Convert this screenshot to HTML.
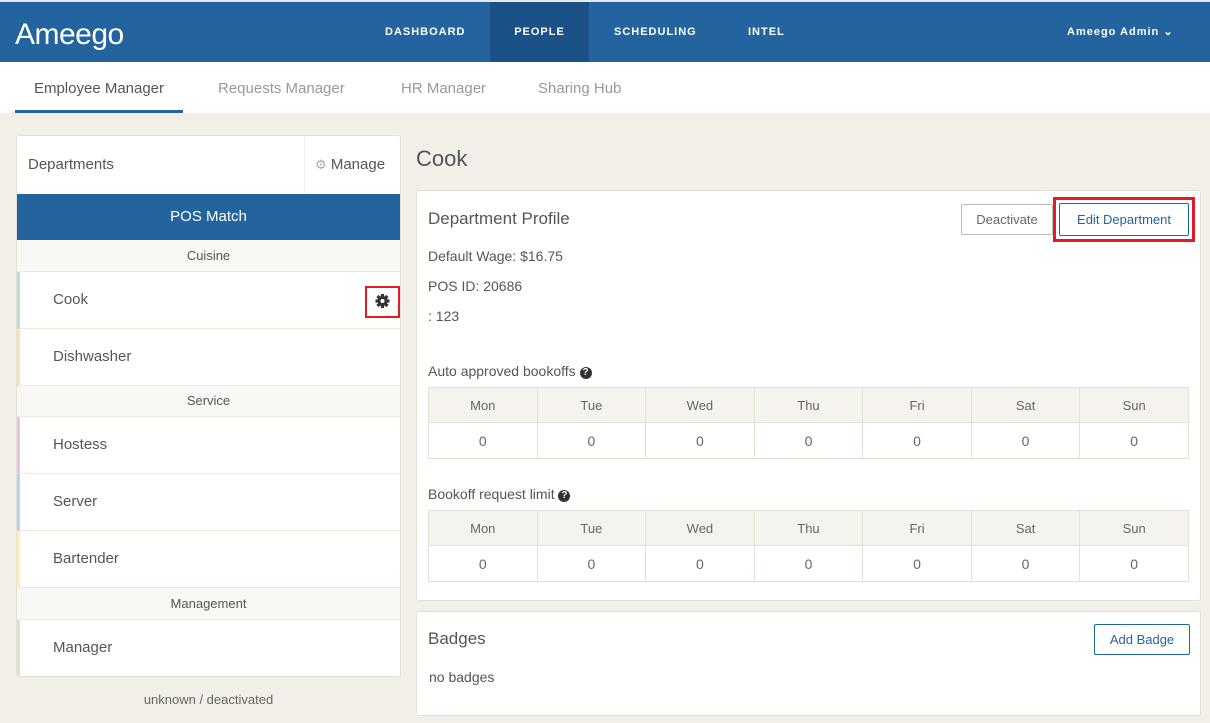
<!DOCTYPE html>
<html><head><meta charset="utf-8"><style>
*{box-sizing:border-box;margin:0;padding:0}
body{width:1210px;height:723px;overflow:hidden;background:#f2efe9;font-family:"Liberation Sans",sans-serif;color:#555;position:relative}
.a{position:absolute}
.nav{left:0;top:0;width:1210px;height:62px;background:#23649e;border-top:2px solid #e8e8e8}
.nav .i{position:absolute;top:0;height:60px;line-height:60px;color:#fff;font-size:11px;letter-spacing:1px;font-weight:600}
.tabs{left:0;top:62px;width:1210px;height:51px;background:#fff}
.tab{position:absolute;top:0;height:51px;line-height:54px;font-size:15px;color:#999}
.panel{background:#fff;border:1px solid #e5e0d6;border-radius:3px}
.row{position:absolute;left:0;width:383px;background:#fff;border-bottom:1px solid #eee9e0;font-size:15px;color:#555;padding-left:33px;border-left:3px solid}
.grp{position:absolute;left:0;width:383px;background:#f9f8f4;border-bottom:1px solid #eee9e0;text-align:center;font-size:13px;color:#555}
table{position:absolute;border-collapse:collapse;width:761px;left:11px}
td{border:1px solid #e6e0d4;text-align:center;font-size:13px;color:#666;width:108.7px}
tr.h td{background:#f5f3ee;height:35px}
tr.b td{height:36px;font-size:14px}
.btn{position:absolute;border:1px solid #bbb;border-radius:2px;background:#fff;font-size:13px;text-align:center}
.q{display:inline-block;width:12px;height:12px;border-radius:6px;background:#333;color:#fff;font-size:10px;text-align:center;line-height:12px;font-weight:bold;vertical-align:1px}
</style></head><body>
<div class="a nav">
 <div class="i" style="left:15px;font-size:30px;letter-spacing:-0.5px;line-height:66px;font-weight:normal">Ameego</div>
 <div class="i" style="left:385px">DASHBOARD</div>
 <div class="i" style="left:490px;width:99px;background:#1b5186;text-align:center">PEOPLE</div>
 <div class="i" style="left:614px">SCHEDULING</div>
 <div class="i" style="left:748px">INTEL</div>
 <div class="i" style="left:1067px">Ameego Admin &#8964;</div>
</div>
<div class="a tabs">
 <div class="tab" style="left:15px;width:168px;text-align:center;color:#555;border-bottom:3px solid #23649e">Employee Manager</div>
 <div class="tab" style="left:218px">Requests Manager</div>
 <div class="tab" style="left:401px">HR Manager</div>
 <div class="tab" style="left:538px">Sharing Hub</div>
</div>

<div class="a panel" style="left:16px;top:135px;width:385px;height:542px;overflow:hidden">
 <div class="a" style="left:11px;top:0;height:57px;line-height:57px;font-size:15px">Departments</div>
 <div class="a" style="left:287px;top:0;width:96px;height:57px;border-left:1px solid #eee;line-height:57px;font-size:15px;padding-left:10px"><span style="color:#aaa;font-size:13px">&#9881;</span> Manage</div>
 <div class="a" style="left:0;top:58px;width:383px;height:46px;background:#23649e;color:#fff;text-align:center;line-height:46px;font-size:15px">POS Match</div>
 <div class="grp" style="top:104px;height:32px;line-height:32px">Cuisine</div>
 <div class="row" style="top:136px;height:57px;line-height:56px;border-left-color:#b6e0d4">Cook</div>
 <div class="a" style="left:348px;top:150px;width:35px;height:32px;border:2px solid #e31b23"><svg width="31" height="28" viewBox="0 0 31 28"><g transform="translate(15.5,13)" fill="#333"><circle r="5"/><rect x="-1.6" y="-7" width="3.2" height="14"/><rect x="-1.6" y="-7" width="3.2" height="14" transform="rotate(45)"/><rect x="-1.6" y="-7" width="3.2" height="14" transform="rotate(90)"/><rect x="-1.6" y="-7" width="3.2" height="14" transform="rotate(135)"/><circle r="2" fill="#fff"/></g></svg></div>
 <div class="row" style="top:193px;height:57px;line-height:56px;border-left-color:#fde1b0">Dishwasher</div>
 <div class="grp" style="top:250px;height:31px;line-height:30px">Service</div>
 <div class="row" style="top:281px;height:57px;line-height:56px;border-left-color:#e8c1e8">Hostess</div>
 <div class="row" style="top:338px;height:57px;line-height:56px;border-left-color:#b3d3ee">Server</div>
 <div class="row" style="top:395px;height:57px;line-height:56px;border-left-color:#fdf2a6">Bartender</div>
 <div class="grp" style="top:452px;height:32px;line-height:32px">Management</div>
 <div class="row" style="top:484px;height:57px;line-height:56px;border-left-color:#d6e8c2;border-bottom:none">Manager</div>
</div>
<div class="a" style="left:16px;top:692px;width:385px;text-align:center;font-size:13px;color:#666">unknown / deactivated</div>

<div class="a" style="left:416px;top:146px;font-size:22px;color:#555">Cook</div>
<div class="a panel" style="left:416px;top:190px;width:785px;height:411px">
 <div class="a" style="left:11px;top:18px;font-size:17px;color:#555">Department Profile</div>
 <div class="btn" style="left:544px;top:13px;width:92px;height:31px;line-height:29px;color:#666">Deactivate</div>
 <div class="a" style="left:636px;top:6px;width:142px;height:45px;border:3px solid #e31b23"></div>
 <div class="btn" style="left:642px;top:12px;width:130px;height:33px;line-height:31px;border-color:#23649e;color:#23649e">Edit Department</div>
 <div class="a" style="left:11px;top:57px;font-size:14px">Default Wage: $16.75</div>
 <div class="a" style="left:11px;top:87px;font-size:14px">POS ID: 20686</div>
 <div class="a" style="left:11px;top:117px;font-size:14px">: 123</div>
 <div class="a" style="left:11px;top:172px;font-size:14px">Auto approved bookoffs <span class="q">?</span></div>
 <table style="top:196px"><tr class="h"><td>Mon</td><td>Tue</td><td>Wed</td><td>Thu</td><td>Fri</td><td>Sat</td><td>Sun</td></tr><tr class="b"><td>0</td><td>0</td><td>0</td><td>0</td><td>0</td><td>0</td><td>0</td></tr></table>
 <div class="a" style="left:11px;top:295px;font-size:14px">Bookoff request limit <span class="q">?</span></div>
 <table style="top:319px"><tr class="h"><td>Mon</td><td>Tue</td><td>Wed</td><td>Thu</td><td>Fri</td><td>Sat</td><td>Sun</td></tr><tr class="b"><td>0</td><td>0</td><td>0</td><td>0</td><td>0</td><td>0</td><td>0</td></tr></table>
</div>
<div class="a panel" style="left:416px;top:611px;width:785px;height:105px">
 <div class="a" style="left:11px;top:17px;font-size:17px">Badges</div>
 <div class="btn" style="left:677px;top:12px;width:96px;height:31px;line-height:29px;border-color:#23649e;color:#23649e">Add Badge</div>
 <div class="a" style="left:12px;top:57px;font-size:14px">no badges</div>
</div>
</body></html>
